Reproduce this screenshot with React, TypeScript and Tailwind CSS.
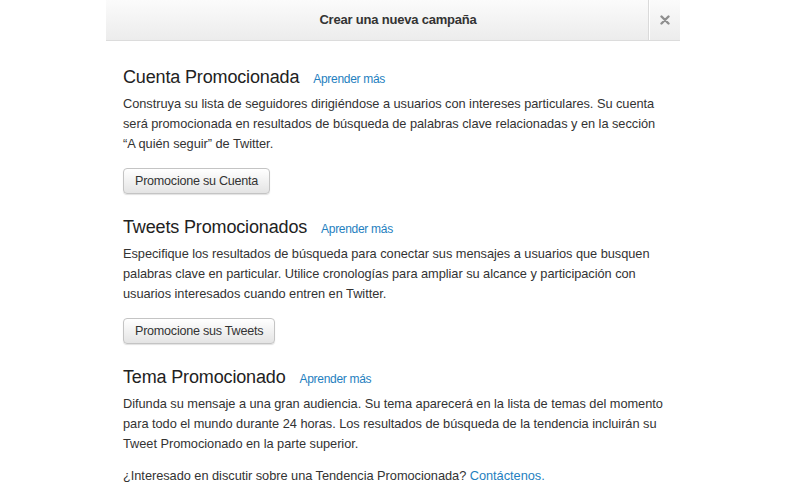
import React from "react";

const font = { fontFamily: '"Liberation Sans", Arial, Helvetica, sans-serif' };

function Btn({ children }: { children: React.ReactNode }) {
  return (
    <button className="h-[26px] px-[11px] rounded-[4px] border border-[#c4c4c4] bg-gradient-to-b from-[#ffffff] to-[#e4e4e4] text-[12.6px] tracking-[-0.25px] text-[#333] shadow-[0_1px_1px_rgba(0,0,0,0.12)] leading-none">
      {children}
    </button>
  );
}

function Heading({ title }: { title: string }) {
  return (
    <div className="flex items-baseline h-[24px] leading-[24px]">
      <span className="text-[18px] tracking-[-0.15px] text-[#222]">{title}</span>
      <a className="ml-[14px] text-[12px] tracking-[-0.3px] text-[#1f7fc0]">Aprender más</a>
    </div>
  );
}

export default function App() {
  return (
    <div className="w-[785px] h-[504px] bg-white overflow-hidden" style={font}>
      <div className="ml-[106px] w-[574px]">
        <div className="h-[41px] flex border-b border-[#dcdcdc] bg-gradient-to-b from-[#fbfbfb] to-[#ececec]">
          <div className="flex-1 flex items-center justify-center pl-[42px] text-[13px] tracking-[-0.2px] font-bold text-[#333]">
            Crear una nueva campaña
          </div>
          <div className="w-[32px] flex items-center justify-center border-l border-[#dadada] shadow-[inset_1px_0_0_#fff]">
            <svg width="10" height="10" viewBox="0 0 10 10">
              <path d="M1.5 1.5 L8.5 8.5 M8.5 1.5 L1.5 8.5" stroke="#8f8f8f" strokeWidth="2.4" strokeLinecap="round" />
            </svg>
          </div>
        </div>
        <div className="pl-[17px] pr-[14px] pt-[24px] text-[12.8px] tracking-[-0.04px] leading-[20px] text-[#333]">
          <Heading title="Cuenta Promocionada" />
          <p className="mt-[5px]">
            Construya su lista de seguidores dirigiéndose a usuarios con intereses particulares. Su cuenta será promocionada en resultados de búsqueda de palabras clave relacionadas y en la sección “A quién seguir” de Twitter.
          </p>
          <div className="mt-[14px]">
            <Btn>Promocione su Cuenta</Btn>
          </div>

          <div className="mt-[21px]">
            <Heading title="Tweets Promocionados" />
          </div>
          <p className="mt-[5px]">
            Especifique los resultados de búsqueda para conectar sus mensajes a usuarios que busquen palabras clave en particular. Utilice cronologías para ampliar su alcance y participación con usuarios interesados cuando entren en Twitter.
          </p>
          <div className="mt-[14px]">
            <Btn>Promocione sus Tweets</Btn>
          </div>

          <div className="mt-[21px]">
            <Heading title="Tema Promocionado" />
          </div>
          <p className="mt-[5px]">
            Difunda su mensaje a una gran audiencia. Su tema aparecerá en la lista de temas del momento para todo el mundo durante 24 horas. Los resultados de búsqueda de la tendencia incluirán su Tweet Promocionado en la parte superior.
          </p>
          <p className="mt-[12px]">
            ¿Interesado en discutir sobre una Tendencia Promocionada? <a className="text-[#1f7fc0]">Contáctenos.</a>
          </p>
        </div>
      </div>
    </div>
  );
}
